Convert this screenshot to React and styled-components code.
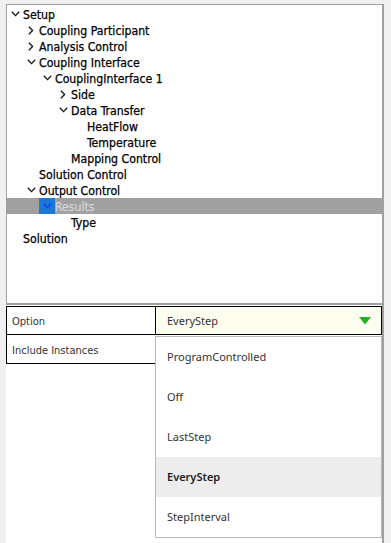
import React from "react";
import styled, { createGlobalStyle } from "styled-components";

const Global = createGlobalStyle`
  html, body { margin: 0; padding: 0; background: #f0f0f0; }
  body { width: 391px; height: 543px; overflow: hidden; }
`;

const Page = styled.div`
  padding: 4px 0 0 6px;
  height: 543px;
  box-sizing: border-box;
`;

const Frame = styled.div`
  width: 378px;
  height: 539px;
  box-sizing: border-box;
  background: #fff;
  border-right: 2px solid #a0a0a0;
  display: flex;
  flex-direction: column;
`;

const TreePanel = styled.div`
  height: 301px;
  box-sizing: border-box;
  border-top: 1px solid #a0a0a0;
  border-left: 1px solid #a0a0a0;
  border-bottom: 2px solid #a0a0a0;
  padding-top: 1px;
  display: flex;
  flex-direction: column;
  font-family: "DejaVu Sans Condensed", "DejaVu Sans", sans-serif;
  font-size: 12.2px;
  color: #000;
  -webkit-text-stroke: 0.25px currentColor;
`;

const Row = styled.div`
  height: 16px;
  display: flex;
  align-items: center;
  padding-left: ${(p) => p.$level * 16}px;
  background: ${(p) => (p.$selected ? "#a0a0a0" : "transparent")};
  color: ${(p) => (p.$selected ? "#d4d4d4" : "#000")};
`;

const Toggle = styled.span`
  width: 16px;
  height: 16px;
  flex: none;
  display: flex;
  align-items: center;
  justify-content: center;
  background: ${(p) => (p.$selected ? "#1c78d6" : "transparent")};
`;

const Label = styled.span`
  white-space: nowrap;
  line-height: 16px;
  padding-top: 1px;
`;

const Chevron = ({ open, color = "#111" }) =>
  open ? (
    <svg width="9" height="6" viewBox="0 0 9 6">
      <path d="M0.8 0.8 L4.5 4.6 L8.2 0.8" fill="none" stroke={color} strokeWidth="1.3" />
    </svg>
  ) : (
    <svg width="6" height="9" viewBox="0 0 6 9">
      <path d="M0.8 0.8 L4.6 4.5 L0.8 8.2" fill="none" stroke={color} strokeWidth="1.3" />
    </svg>
  );

const Grid = styled.div`
  position: relative;
  margin-top: 1px;
  display: grid;
  grid-template-columns: 149px 227px;
  grid-template-rows: 29px 29px;
  font-family: "DejaVu Sans Condensed", "DejaVu Sans", sans-serif;
  font-size: 11px;
  color: #333;
`;

const NameCell = styled.div`
  box-sizing: border-box;
  border-left: 1px solid #000;
  border-bottom: 1px solid #000;
  border-top: ${(p) => (p.$first ? "1px solid #000" : "none")};
  padding: 2px 0 0 5px;
  display: flex;
  align-items: center;
`;

const ValueCell = styled.div`
  box-sizing: border-box;
  border: 1px solid #000;
  background: #fefef0;
  padding: 0 10px 0 11px;
  display: flex;
  align-items: center;
  justify-content: space-between;
  font-family: "Noto Sans", sans-serif;
  font-size: 11px;
  color: #333;
`;

const Empty = styled.div``;

const Dropdown = styled.div`
  position: absolute;
  left: 149px;
  top: 30px;
  width: 227px;
  box-sizing: border-box;
  border: 1px solid #b8b8b8;
  background: #fff;
  display: flex;
  flex-direction: column;
  font-family: "Noto Sans", sans-serif;
  font-size: 11px;
`;

const Item = styled.div`
  height: 40px;
  display: flex;
  align-items: center;
  padding: 0 0 2px 11px;
  box-sizing: border-box;
  background: ${(p) => (p.$active ? "#ededed" : "#fff")};
  color: ${(p) => (p.$active ? "#222" : "#333")};
  font-weight: ${(p) => (p.$active ? 600 : 400)};
`;

const tree = [
  { label: "Setup", level: 0, open: true },
  { label: "Coupling Participant", level: 1, open: false },
  { label: "Analysis Control", level: 1, open: false },
  { label: "Coupling Interface", level: 1, open: true },
  { label: "CouplingInterface 1", level: 2, open: true },
  { label: "Side", level: 3, open: false },
  { label: "Data Transfer", level: 3, open: true },
  { label: "HeatFlow", level: 4 },
  { label: "Temperature", level: 4 },
  { label: "Mapping Control", level: 3 },
  { label: "Solution Control", level: 1 },
  { label: "Output Control", level: 1, open: true },
  { label: "Results", level: 2, open: true, selected: true },
  { label: "Type", level: 3 },
  { label: "Solution", level: 0 },
];

const options = ["ProgramControlled", "Off", "LastStep", "EveryStep", "StepInterval"];

export default function App() {
  return (
    <>
      <Global />
      <Page>
        <Frame>
          <TreePanel>
            {tree.map((n) => (
              <Row key={n.label} $level={n.level} $selected={n.selected}>
                <Toggle $selected={n.selected}>
                  {n.open !== undefined && (
                    <Chevron open={n.open} color={n.selected ? "#1238f0" : "#111"} />
                  )}
                </Toggle>
                <Label>{n.label}</Label>
              </Row>
            ))}
          </TreePanel>
          <Grid>
            <NameCell $first>Option</NameCell>
            <ValueCell>
              <span>EveryStep</span>
              <svg width="12" height="8" viewBox="0 0 12 8">
                <path d="M0 0 H12 L6 7.5 Z" fill="#22b322" />
              </svg>
            </ValueCell>
            <NameCell>Include Instances</NameCell>
            <Empty />
            <Dropdown>
              {options.map((o) => (
                <Item key={o} $active={o === "EveryStep"}>
                  {o}
                </Item>
              ))}
            </Dropdown>
          </Grid>
        </Frame>
      </Page>
    </>
  );
}
